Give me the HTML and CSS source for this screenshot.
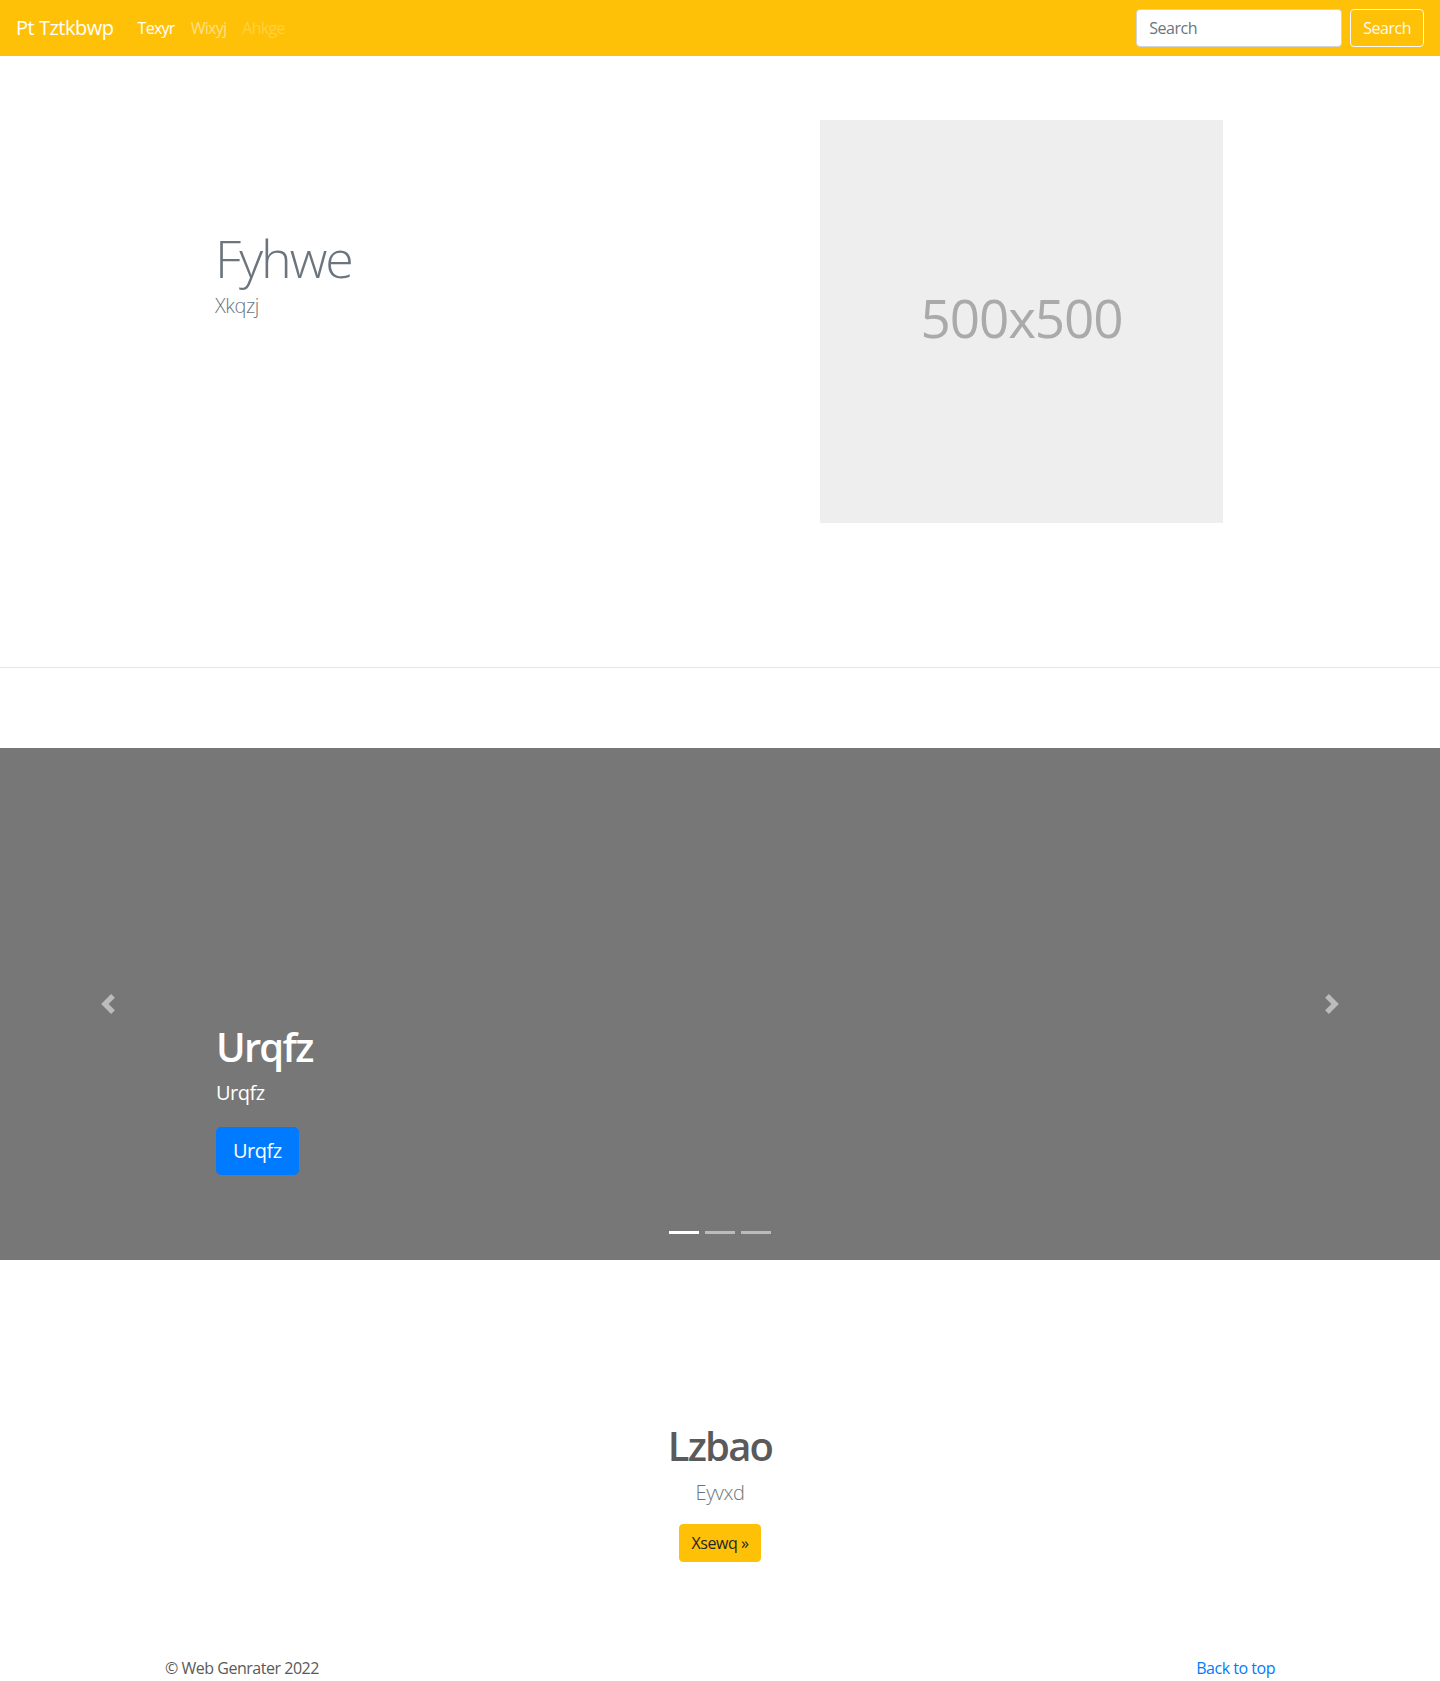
FILE: index.html
```html
<!DOCTYPE html>
<html lang="en">
<head>
<meta charset="utf-8">
<title>Pt Tztkbwp</title>
<link rel="stylesheet" href="styles.css">
</head>
<body>
<nav class="navbar">
  <a class="brand" href="#">Pt Tztkbwp</a>
  <ul class="nav">
    <li><a class="nav-link active" href="#">Texyr</a></li>
    <li><a class="nav-link" href="#">Wixyj</a></li>
    <li><a class="nav-link disabled" href="#">Ahkge</a></li>
  </ul>
  <form class="search">
    <input class="search-input" type="search" placeholder="Search">
    <button class="btn-outline" type="button">Search</button>
  </form>
</nav>

<section class="hero">
  <div class="container hero-row">
    <div class="hero-text">
      <h1 class="display">Fyhwe</h1>
      <p class="lead muted hero-lead">Xkqzj</p>
    </div>
    <div class="hero-media">
      <div class="placeholder">500x500</div>
    </div>
  </div>
</section>

<hr class="divider">

<section class="carousel">
  <div class="slide">
    <div class="caption">
      <h1 class="caption-title">Urqfz</h1>
      <p class="caption-text">Urqfz</p>
      <p class="caption-action"><a class="btn-primary" href="#">Urqfz</a></p>
    </div>
  </div>
  <a class="control control-prev" href="#">
    <svg width="20" height="20" viewBox="0 0 8 8"><path fill="#fff" d="M5.25 0l-4 4 4 4 1.5-1.5L4.25 4l2.5-2.5L5.25 0z"/></svg>
  </a>
  <a class="control control-next" href="#">
    <svg width="20" height="20" viewBox="0 0 8 8"><path fill="#fff" d="M2.75 0l-1.5 1.5L3.75 4l-2.5 2.5L2.75 8l4-4-4-4z"/></svg>
  </a>
  <ol class="indicators">
    <li class="active"></li>
    <li></li>
    <li></li>
  </ol>
</section>

<section class="jumbotron">
  <h1 class="jumbo-title">Lzbao</h1>
  <p class="lead muted">Eyvxd</p>
  <p class="jumbo-action"><a class="btn-warning" href="#">Xsewq &raquo;</a></p>
</section>

<footer class="container footer">
  <p>&copy; Web Genrater 2022</p>
  <p><a class="link" href="#">Back to top</a></p>
</footer>
</body>
</html>
```

FILE: styles.css
```css
* { box-sizing: border-box; }
html, body { margin: 0; padding: 0; }
body {
  font-family: "Open Sans", "Noto Sans", sans-serif;
  font-size: 16px;
  line-height: 1.5;
  letter-spacing: -0.03em;
  color: #5a5a5a;
  background: #fff;
}
a { text-decoration: none; }
p { margin: 0; }
h1 { margin: 0; }

.navbar {
  height: 56px;
  background: #ffc107;
  display: flex;
  align-items: center;
  padding: 8px 16px;
}
.brand {
  color: #fff;
  font-size: 20px;
  line-height: 30px;
  padding: 5px 0;
  margin-right: 16px;
}
.nav {
  display: flex;
  list-style: none;
  margin: 0;
  padding: 0;
  flex: 1;
}
.nav-link {
  display: block;
  padding: 8px;
  letter-spacing: -0.045em;
  color: rgba(255,255,255,.5);
}
.nav-link.active { color: #fff; }
.nav-link.disabled { color: rgba(255,255,255,.25); }
.search { display: flex; align-items: center; }
.search-input {
  width: 206px;
  height: 38px;
  padding: 6px 12px;
  font: inherit;
  letter-spacing: -0.03em;
  color: #495057;
  border: 1px solid #ced4da;
  border-radius: 4px;
  margin-right: 8px;
  background: #fff;
}
.search-input::placeholder { color: #6c757d; }
.btn-outline {
  height: 38px;
  padding: 6px 12px;
  font: inherit;
  letter-spacing: -0.03em;
  color: #f8f9fa;
  background: transparent;
  border: 1px solid #f8f9fa;
  border-radius: 4px;
}

.container {
  width: 1140px;
  margin: 0 auto;
  padding: 0 15px;
}
.hero { padding: 64px 0; }
.hero-row { display: flex; }
.hero-text {
  flex: 1;
  padding: 106px 48px 0 50px;
}
.display {
  font-size: 52px;
  font-weight: 300;
  line-height: 64px;
  letter-spacing: -2px;
  color: #6c757d;
}
.lead { font-size: 20px; font-weight: 300; }
.hero-lead { margin-top: 1px; }
.muted { color: #6c757d; }
.hero-media {
  flex: 1;
  padding-left: 102px;
}
.placeholder {
  width: 403px;
  height: 403px;
  background: #eee;
  color: #aaa;
  font-size: 53px;
  letter-spacing: -0.02em;
  display: flex;
  align-items: center;
  justify-content: center;
  padding-bottom: 8px;
}

.divider {
  margin: 80px 0;
  border: 0;
  border-top: 1px solid rgba(0,0,0,.1);
  height: 0;
}

.carousel {
  position: relative;
  height: 512px;
  background: #777;
  margin-bottom: 64px;
}
.slide {
  height: 100%;
  display: flex;
  flex-direction: column;
  justify-content: flex-end;
  padding: 0 15% 65px;
}
.caption {
  color: #fff;
  padding: 20px 0;
}
.caption-title {
  font-size: 40px;
  font-weight: 600;
  line-height: 1.2;
  letter-spacing: -0.045em;
  margin-bottom: 8px;
}
.caption-text {
  font-size: 20px;
  line-height: 1.4;
  margin-bottom: 20px;
}
.caption-action { line-height: 1.4; }
.btn-primary {
  display: inline-block;
  background: #007bff;
  color: #fff;
  font-size: 20px;
  line-height: 30px;
  padding: 8px 16px;
  border: 1px solid #007bff;
  border-radius: 4.8px;
  vertical-align: top;
}
.control {
  position: absolute;
  top: 0;
  bottom: 0;
  width: 15%;
  display: flex;
  align-items: center;
  justify-content: center;
  opacity: .5;
}
.control svg { display: block; }
.control-prev { left: 0; }
.control-next { right: 0; }
.indicators {
  position: absolute;
  left: 0;
  right: 0;
  bottom: 0;
  margin: 0 0 16px;
  padding: 0;
  list-style: none;
  display: flex;
  justify-content: center;
}
.indicators li {
  width: 30px;
  height: 3px;
  margin: 10px 3px;
  background: #fff;
  opacity: .5;
}
.indicators li.active { opacity: 1; }

.jumbotron {
  text-align: center;
  padding: 98px 32px 78px;
}
.jumbo-title {
  font-size: 40px;
  font-weight: 600;
  line-height: 1.2;
  letter-spacing: -0.045em;
  margin-bottom: 8px;
  color: #5a5a5a;
}
.jumbotron .lead { margin-bottom: 16px; }
.jumbo-action { margin-bottom: 16px; }
.btn-warning {
  display: inline-block;
  background: #ffc107;
  color: #212529;
  font-size: 16px;
  line-height: 24px;
  padding: 6px 12px;
  border: 1px solid #ffc107;
  border-radius: 4px;
  vertical-align: top;
}

.footer {
  display: flex;
  justify-content: space-between;
}
.footer p { margin-bottom: 16px; }
.link { color: #007bff; }
```
